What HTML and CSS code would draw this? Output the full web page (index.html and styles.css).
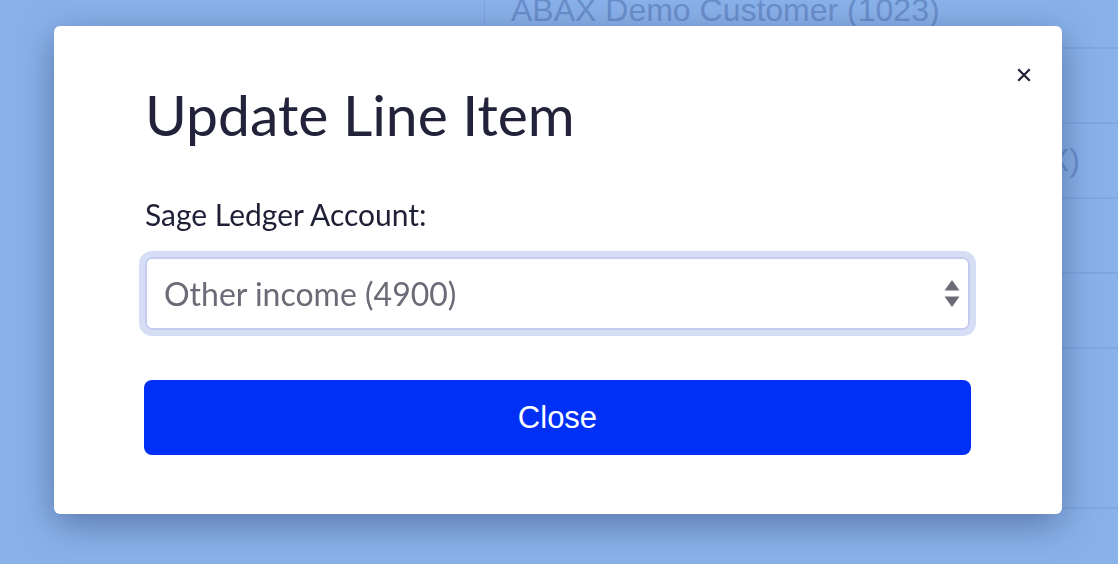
FILE: index.html
```html
<!DOCTYPE html>
<html>
<head>
<meta charset="utf-8">
<link rel="stylesheet" href="styles.css">
</head>
<body>
<div class="page">
  <div class="table">
    <div class="col-left"></div>
    <div class="col-right">
      <div class="row row-first"><span class="cell-text">ABAX Demo Customer (1023)</span></div>
      <div class="row"></div>
      <div class="row"><span class="cell-text cell-end">(XXXXXXXXXXXXXXXX)</span></div>
      <div class="row"></div>
      <div class="row"></div>
      <div class="row row-tall"></div>
    </div>
  </div>
  <div class="table-foot"></div>
</div>

<div class="overlay">
  <div class="modal">
    <button class="modal-x" aria-label="Close">
      <svg width="14" height="14" viewBox="0 0 14 14"><path d="M2 2 L12 12 M12 2 L2 12" stroke="#1f2035" stroke-width="2.2" stroke-linecap="square"/></svg>
    </button>
    <h1 class="modal-title">Update Line Item</h1>
    <label class="field-label">Sage Ledger Account:</label>
    <div class="select">
      <span class="select-value">Other income (4900)</span>
      <span class="select-arrows">
        <svg width="16" height="30" viewBox="0 0 16 30"><path d="M0.5 11.5 L8 1 L15.5 11.5 Z" fill="#6b6b78"/><path d="M0.5 17.5 L15.5 17.5 L8 28 Z" fill="#6b6b78"/></svg>
      </span>
    </div>
    <button class="btn-close">Close</button>
  </div>
</div>
</body>
</html>
```

FILE: styles.css
```css
* { box-sizing: border-box; }
html, body { margin: 0; padding: 0; }
body {
  width: 1118px;
  height: 564px;
  overflow: hidden;
  background: #8ab2ea;
  font-family: "Lato", "Liberation Sans", sans-serif;
}
.page {
  margin-top: -8px;
}
.table {
  display: grid;
  grid-template-columns: 485px 1fr;
}
.col-left {
  border-right: 1px solid #7fa6e0;
}
.row {
  height: 75px;
  border-bottom: 2px solid #80a7e1;
  display: flex;
  align-items: center;
  padding-left: 26px;
  overflow: hidden;
}
.row-first { height: 57px; align-items: flex-start; padding-top: 0; }
.row-tall { height: 160px; }
.cell-text {
  font-family: "Liberation Sans", Arial, sans-serif;
  font-size: 32px;
  line-height: 37px;
  color: #6a8fcb;
  white-space: nowrap;
}
.cell-end { margin-left: 206px; }
.table-foot { height: 60px; }

.overlay {
  position: fixed;
  inset: 0;
  padding: 26px 56px 0 54px;
}
.modal {
  position: relative;
  width: 1008px;
  height: 488px;
  background: #fff;
  border-radius: 6px;
  box-shadow: 0 10px 36px rgba(40, 60, 110, 0.5);
  padding: 55px 92px 0 91px;
  display: flex;
  flex-direction: column;
}
.modal-x {
  position: absolute;
  top: 42px;
  right: 31px;
  width: 14px;
  height: 14px;
  padding: 0;
  border: 0;
  background: none;
  display: flex;
}
.modal-title {
  margin: 0;
  font-size: 57px;
  font-weight: 400;
  color: #22233a;
  line-height: 66px;
}
.field-label {
  margin-top: 49px;
  font-size: 30px;
  color: #1f2035;
  line-height: 36px;
}
.select {
  margin-top: 25px;
  height: 73px;
  border: 2px solid #c3ccf0;
  border-radius: 7px;
  box-shadow: 0 0 0 6px #d6def6;
  display: flex;
  align-items: center;
  justify-content: space-between;
  padding: 0 8px 0 17px;
}
.select-value {
  font-size: 32px;
  color: #6b6b78;
}
.select-arrows { display: flex; }
.btn-close {
  margin-top: 50px;
  margin-left: -1px;
  margin-right: -1px;
  height: 75px;
  border: 0;
  border-radius: 8px;
  background: #0030f5;
  color: #fff;
  font-family: "Liberation Sans", Arial, sans-serif;
  font-size: 31px;
}
```
